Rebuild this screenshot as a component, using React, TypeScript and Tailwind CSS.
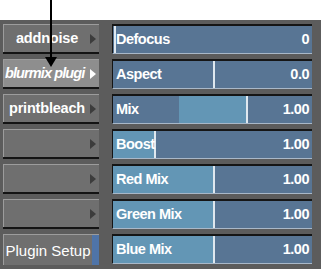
import React from 'react';

const buttons = [
  { label: 'addnoise', active: false },
  { label: 'blurmix plugi', active: true },
  { label: 'printbleach', active: false },
  { label: '', active: false },
  { label: '', active: false },
  { label: '', active: false },
];

// fill: [start, end] in px inside the 200px track, line: x of white marker
const sliders = [
  { label: 'Defocus', value: '0', fill: null as null | [number, number], line: 1 },
  { label: 'Aspect', value: '0.0', fill: null, line: 100 },
  { label: 'Mix', value: '1.00', fill: [66, 133] as [number, number], line: 133 },
  { label: 'Boost', value: '1.00', fill: [0, 41] as [number, number], line: 41 },
  { label: 'Red Mix', value: '1.00', fill: [0, 100] as [number, number], line: 100 },
  { label: 'Green Mix', value: '1.00', fill: [0, 100] as [number, number], line: 100 },
  { label: 'Blue Mix', value: '1.00', fill: [0, 100] as [number, number], line: 100 },
];

function SideButton({ label, active }: { label: string; active: boolean }) {
  return (
    <div className="h-[30px] flex flex-col">
      <div
        className={`flex-1 flex items-center border-t border-l border-[#9c9c9c] ${
          active ? 'bg-[#8e8e8e]' : 'bg-[#6f6f6f]'
        }`}
      >
        <span
          className={`flex-1 text-white text-[14.5px] font-bold leading-none ${
            active ? 'italic tracking-[-0.9px] text-left pl-[1px]' : 'text-center tracking-[-0.2px]'
          }`}
        >
          {label}
        </span>
        <span
          className={`mr-[3px] w-0 h-0 border-y-[5px] border-y-transparent border-l-[6px] ${
            active ? 'border-l-white' : 'border-l-[#3c3c3c]'
          }`}
        />
      </div>
      <div className="h-[2px] bg-[#141414]" />
    </div>
  );
}

function Slider({ label, value, fill, line }: { label: string; value: string; fill: null | [number, number]; line: number }) {
  return (
    <div className="h-[30px] flex flex-col">
      <div className="flex-1 relative bg-[#587594] border-t-2 border-l border-[#151515] border-b border-b-[#a9b8c8] overflow-hidden">
        {fill && (
          <div
            className="absolute top-0 bottom-0 bg-[#6396b5]"
            style={{ left: fill[0], width: fill[1] - fill[0] }}
          />
        )}
        <div className="absolute top-0 bottom-0 w-[2px] bg-[#dfe8ef]" style={{ left: line }} />
        <div className="relative h-full flex items-center justify-between pl-[3px] pr-[3px] text-white text-[14.5px] font-bold leading-none tracking-[-0.5px]">
          <span>{label}</span>
          <span>{value}</span>
        </div>
      </div>
    </div>
  );
}

export default function App() {
  return (
    <div className="w-[321px] h-[269px] bg-white relative overflow-hidden" style={{ fontFamily: '"Liberation Sans", Arial, sans-serif' }}>
      <div className="h-[20px]" />
      <div className="h-[249px] bg-[#5c5c5c] flex pt-[4px]">
        <div className="ml-[3px] w-[96px] flex flex-col gap-[5px]">
          {buttons.map((b, i) => (
            <SideButton key={i} label={b.label} active={b.active} />
          ))}
          <div className="h-[31px] flex border-t border-l border-[#9c9c9c] bg-[#6f6f6f]">
            <span className="flex-1 flex items-center justify-center text-white text-[15px] leading-none">Plugin Setup</span>
            <span className="w-[7px] bg-[#4f74a8]" />
          </div>
        </div>
        <div className="ml-[13px] w-[200px] flex flex-col gap-[5px]">
          {sliders.map((s) => (
            <Slider key={s.label} {...s} />
          ))}
        </div>
      </div>
      {/* pointer arrow */}
      <div className="absolute left-[50px] top-0 w-[2px] h-[58px] bg-black" />
      <div className="absolute left-[45px] top-[57px] w-0 h-0 border-x-[6px] border-x-transparent border-t-[10px] border-t-black" />
    </div>
  );
}
